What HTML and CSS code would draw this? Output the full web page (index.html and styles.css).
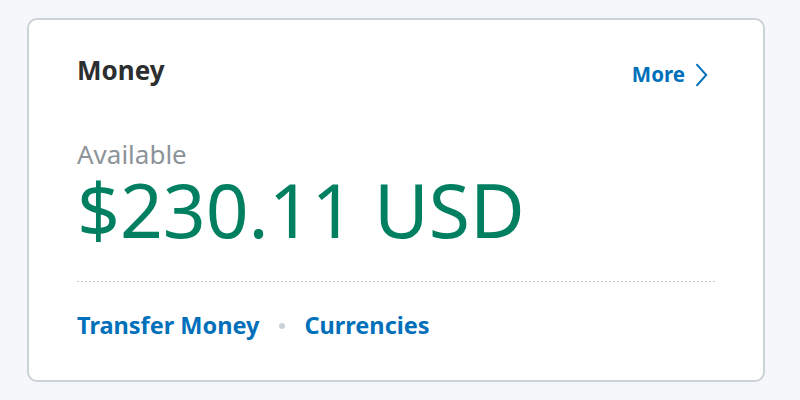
FILE: index.html
```html
<!DOCTYPE html>
<html>
<head>
<meta charset="utf-8">
<link rel="stylesheet" href="styles.css">
</head>
<body>
<div class="card">
  <div class="header">
    <h2 class="title">Money</h2>
    <a class="more" href="#">More
      <svg class="chev" width="13" height="24" viewBox="0 0 13 24"><path d="M1.5 1.2 L11.2 12 L1.5 22.8" fill="none" stroke="#0070ba" stroke-width="2"/></svg>
    </a>
  </div>
  <div class="label">Available</div>
  <div class="amount">$230.11 USD</div>
  <div class="divider"></div>
  <div class="links">
    <a class="link" href="#">Transfer Money</a>
    <span class="dot"></span>
    <a class="link" href="#">Currencies</a>
  </div>
</div>
</body>
</html>
```
FILE: styles.css
```css
html, body {
  margin: 0;
  background: #f5f7fa;
  font-family: "Noto Sans", "Open Sans", sans-serif;
}
body {
  padding: 18px 35px 0 27px;
  height: 400px;
  box-sizing: border-box;
}
.card {
  width: 738px;
  height: 364px;
  box-sizing: border-box;
  background: #fff;
  border: 2px solid #cbd2d6;
  border-radius: 10px;
  padding: 34px 48px 0;
}
.header {
  display: flex;
  justify-content: space-between;
  align-items: flex-start;
  height: 32px;
}
.title {
  margin: 0;
  font-size: 26px;
  line-height: 32px;
  font-weight: 700;
  color: #2c2e2f;
}
.more {
  display: flex;
  align-items: center;
  gap: 10px;
  color: #0070ba;
  text-decoration: none;
  font-size: 20.5px;
  line-height: 32px;
  font-weight: 700;
  margin-top: 4px;
  margin-right: 7px;
}
.chev {
  margin-top: 1px;
}
.label {
  margin-top: 54px;
  font-size: 26px;
  line-height: 28px;
  color: #8c9399;
}
.amount {
  font-size: 75px;
  line-height: 80px;
  color: #017f61;
  margin-top: 1px;
}
.divider {
  margin-top: 32px;
  height: 1px;
  background: repeating-linear-gradient(to right, #c6cacd 0 2px, transparent 2px 4px);
}
.links {
  display: flex;
  align-items: center;
  margin-top: 28px;
  height: 30px;
}
.link {
  color: #0070ba;
  text-decoration: none;
  font-size: 23.5px;
  line-height: 30px;
  font-weight: 700;
}
.dot {
  width: 6px;
  height: 6px;
  border-radius: 50%;
  background: #cbd2d6;
  margin: 2px 19px 0 20px;
}
```
